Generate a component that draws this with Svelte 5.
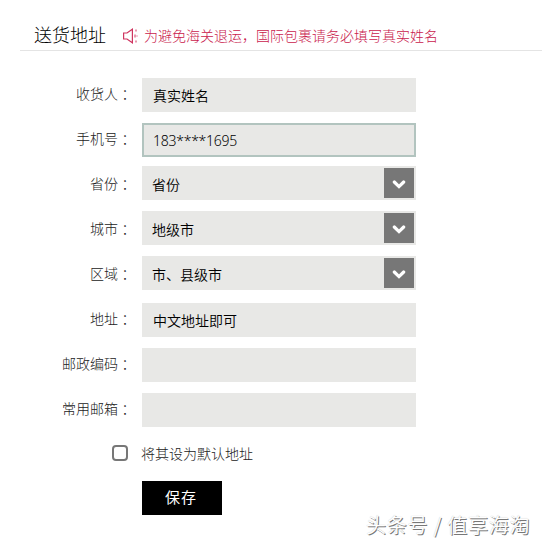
<script>
  const rows = [
    { label: '收货人', kind: 'input', value: '真实姓名' },
    { label: '手机号', kind: 'input', value: '183****1695', active: true },
    { label: '省份', kind: 'select', value: '省份' },
    { label: '城市', kind: 'select', value: '地级市' },
    { label: '区域', kind: 'select', value: '市、县级市' },
    { label: '地址', kind: 'input', value: '中文地址即可' },
    { label: '邮政编码', kind: 'input', value: '' },
    { label: '常用邮箱', kind: 'input', value: '' }
  ];
</script>

<main class="page">
  <header class="head">
    <h1>送货地址</h1>
    <svg class="speaker" width="16" height="16" viewBox="0 0 16 16" fill="none" stroke="#cf3560" stroke-width="1.2">
      <path d="M1.6 5H5L10.4 1.2V14.8L5 11H1.6Z" />
      <path d="M14 1.5v2M14 12.5v2M13 6.5v3M15 7.5v1" stroke-width="1" />
    </svg>
    <p>为避免海关退运，国际包裹请务必填写真实姓名</p>
  </header>

  <form class="form">
    {#each rows as row}
      <div class="row">
        <span class="label">{row.label}<span class="colon">：</span></span>
        <div class="field {row.kind}" class:active={row.active}>
          <span class="value">{row.value}</span>
          {#if row.kind === 'select'}
            <span class="arrow">
              <svg width="14" height="10" viewBox="0 0 14 10" fill="none" stroke="#fff" stroke-width="3.2" stroke-linecap="round">
                <path d="M2.3 2L7 6.6L11.7 2" />
              </svg>
            </span>
          {/if}
        </div>
      </div>
    {/each}
    <div class="default">
      <span class="check"></span>
      <span>将其设为默认地址</span>
    </div>
    <button type="button">保存</button>
  </form>
  <div class="mark">头条号 / 值享海淘</div>
</main>

<style>
  :global(body) {
    margin: 0;
    background: #fff;
  }
  .page {
    position: relative;
    box-sizing: border-box;
    width: 542px;
    height: 543px;
    overflow: hidden;
    font-family: 'Noto Sans CJK SC', sans-serif;
    font-size: 14px;
    line-height: 20px;
    color: #222;
    background: #fff;
  }
  .head {
    display: flex;
    align-items: flex-start;
    box-sizing: border-box;
    height: 51px;
    margin-left: 20px;
    padding: 21px 0 0 15px;
    border-bottom: 1px solid #e4e4e4;
  }
  h1 {
    margin: 0 0 0 -1px;
    font-size: 18px;
    line-height: 26px;
    font-weight: 300;
    color: #000;
    width: 72px;
  }
  .speaker {
    margin-left: 16px;
    margin-top: 7px;
  }
  .head p {
    margin: 4px 0 0 6px;
    font-weight: 300;
    color: #c9184c;
    white-space: nowrap;
  }
  .form {
    padding-top: 22px;
  }
  .row {
    display: flex;
    height: 45px;
  }
  .label {
    width: 132px;
    margin-right: 10px;
    padding-top: 10px;
    text-align: right;
    font-weight: 300;
    white-space: nowrap;
  }
  .colon {
    font-family: 'Noto Sans CJK TC', sans-serif;
    line-height: 1;
    vertical-align: -1px;
  }
  .field {
    display: flex;
    align-items: center;
    justify-content: space-between;
    box-sizing: border-box;
    width: 274px;
    height: 34px;
    margin-top: 5px;
    padding: 0 0 0 11px;
    background: #e8e8e6;
    color: #000;
    font-weight: 350;
  }
  .field.active {
    padding: 2px 0 0 9px;
    border: 2px solid #b2c4bf;
    font-family: 'Noto Sans', sans-serif;
    font-weight: 300;
    color: #000;
    letter-spacing: -0.25px;
  }
  .field.select {
    margin-top: 3px;
    padding: 0 2px 0 10px;
  }
  .select .value {
    padding-top: 1px;
  }
  .arrow {
    display: flex;
    align-items: center;
    justify-content: center;
    width: 30px;
    height: 30px;
    background: #777;
  }
  .arrow svg {
    margin-top: 3px;
  }
  .default {
    display: flex;
    align-items: center;
    height: 20px;
    margin: 10px 0 0 112px;
    font-weight: 300;
  }
  .check {
    box-sizing: border-box;
    width: 16px;
    height: 16px;
    margin-right: 13px;
    border: 2px solid #777;
    border-radius: 4px;
  }
  button {
    display: block;
    box-sizing: border-box;
    width: 80px;
    height: 34px;
    margin: 18px 0 0 142px;
    padding: 0 2px 2px 0;
    border: 0;
    background: #000;
    color: #fff;
    font: 400 15px/20px 'Noto Sans CJK SC', sans-serif;
    letter-spacing: 1px;
  }
  .mark {
    position: absolute;
    left: 366px;
    top: 510px;
    font-size: 20px;
    font-weight: 350;
    line-height: 30px;
    color: #fff;
    letter-spacing: 0.75px;
    white-space: nowrap;
    text-shadow: 1px 1px 0 #777, 0 0 1px #bbb;
  }
</style>
